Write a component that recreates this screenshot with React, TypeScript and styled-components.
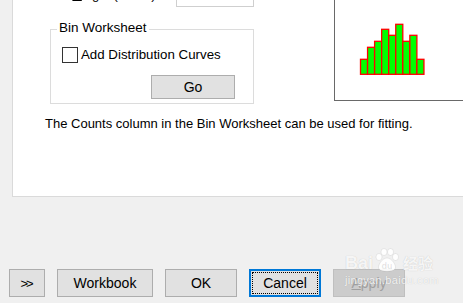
import React from "react";
import styled, { createGlobalStyle } from "styled-components";

const Global = createGlobalStyle`
  html, body { margin: 0; padding: 0; background: #f0f0f0; }
  body { font-family: "Liberation Sans", Arial, sans-serif; font-size: 13px; color: #000; }
`;

const Root = styled.div`
  position: relative;
  width: 463px;
  height: 303px;
  display: flex;
  flex-direction: column;
  overflow: hidden;
  background: #f0f0f0;
`;

const Panel = styled.div`
  margin-left: 12px;
  width: 451px;
  height: 197px;
  box-sizing: border-box;
  background: #fff;
  border-left: 1px solid #dadada;
  border-bottom: 1px solid #dadada;
  overflow: hidden;
  padding-left: 32px;
  display: flex;
  flex-direction: column;
`;

const TopArea = styled.div`
  display: flex;
  align-items: flex-start;
  margin-top: -17px;
  margin-left: 5px;
`;

const LeftCol = styled.div`
  width: 204px;
  flex: none;
  display: flex;
  flex-direction: column;
`;

const HeightRow = styled.div`
  height: 24px;
  display: flex;
  align-items: center;
  justify-content: space-between;
  line-height: 16px;
  font-size: 13px;
`;

const TextBox = styled.div`
  width: 78px;
  height: 24px;
  box-sizing: border-box;
  border: 1px solid #cfcfcf;
  background: #fff;
`;

const GroupBox = styled.div`
  margin-top: 22px;
  width: 204px;
  box-sizing: border-box;
  border: 1px solid #dcdcdc;
  display: flex;
  flex-direction: column;
  padding-bottom: 4px;
`;

const Legend = styled.div`
  align-self: flex-start;
  margin-top: -10px;
  margin-left: 6px;
  padding: 0 2px;
  background: #fff;
  line-height: 16px;
  font-size: 13.5px;
`;

const CheckRow = styled.label`
  margin-top: 11px;
  padding-left: 11px;
  display: flex;
  align-items: center;
  gap: 3px;
  line-height: 16px;
  font-size: 13.3px;
`;

const CheckBox = styled.span`
  width: 16px;
  height: 16px;
  box-sizing: border-box;
  border: 1px solid #333;
  background: #fff;
  flex: none;
`;

const Button = styled.div<{ $w: number; $h: number }>`
  position: relative;
  width: ${(p) => p.$w}px;
  height: ${(p) => p.$h}px;
  box-sizing: border-box;
  border: 1px solid #adadad;
  background: #e1e1e1;
  display: flex;
  align-items: center;
  justify-content: center;
  font-size: 14px;
  color: #000;
  flex: none;
`;

const GoButton = styled(Button)`
  align-self: flex-end;
  margin-top: 12px;
  margin-right: 18px;
`;

const FocusButton = styled(Button)`
  border: 2px solid #0078d7;
  &::after {
    content: "";
    position: absolute;
    inset: 1px;
    border: 1px dotted #000;
  }
`;

const DisabledButton = styled(Button)`
  background: #cccccc;
  border-color: #bfbfbf;
  color: #a0a0a0;
`;

const Preview = styled.div`
  margin-left: 80px;
  width: 160px;
  height: 118px;
  box-sizing: border-box;
  border: 1px solid #696969;
  flex: none;
  background: #fff;
`;

const Histogram = styled.svg`
  display: block;
  margin-top: 39px;
  margin-left: 24px;
`;

const Note = styled.div`
  margin-top: 12px;
  line-height: 16px;
  white-space: nowrap;
  font-size: 13px;
`;

const ButtonBar = styled.div`
  margin-top: auto;
  padding: 0 0 6px 9px;
  display: flex;
  gap: 12px;
`;

const Chevrons = styled.span`
  font-size: 13px;
  letter-spacing: -2px;
  margin-right: 2px;
`;

const Watermark = styled.div`
  position: absolute;
  left: 345px;
  top: 248px;
  display: flex;
  flex-direction: column;
  color: rgba(255, 255, 255, 0.85);
  text-shadow: 0 0 1px rgba(0, 0, 0, 0.2);
  pointer-events: none;
`;

const WmTop = styled.div`
  display: flex;
  align-items: flex-end;
  gap: 1px;
  font-weight: bold;
  font-size: 18px;
  line-height: 18px;
`;

const WmCn = styled.span`
  font-family: "Noto Sans CJK SC", sans-serif;
  font-size: 15px;
  line-height: 18px;
  margin-left: 2px;
`;

const WmUrl = styled.div`
  margin-top: 2px;
  font-size: 11px;
  line-height: 12px;
  letter-spacing: 0.3px;
`;

const bars = [59.3, 47.3, 41.3, 29.3, 35.3, 24.3, 41.3, 35.3, 59.3];

export default function App() {
  return (
    <Root>
      <Global />
      <Panel>
        <TopArea>
          <LeftCol>
            <HeightRow>
              <span>
                Bin <u>H</u>eight (0-100)
              </span>
              <TextBox />
            </HeightRow>
            <GroupBox>
              <Legend>Bin Worksheet</Legend>
              <CheckRow>
                <CheckBox />
                Add Distribution Curves
              </CheckRow>
              <GoButton $w={84} $h={24}>Go</GoButton>
            </GroupBox>
          </LeftCol>
          <Preview>
            <Histogram width="68" height="54" viewBox="359 23 68 54">
              {bars.map((t, i) => (
                <rect
                  key={i}
                  x={360.5 + i * 7.05}
                  y={t}
                  width={7.05}
                  height={74.3 - t}
                  fill="#00ff00"
                  stroke="#ff0000"
                  strokeWidth={1.3}
                />
              ))}
            </Histogram>
          </Preview>
        </TopArea>
        <Note>The Counts column in the Bin Worksheet can be used for fitting.</Note>
      </Panel>
      <ButtonBar>
        <Button $w={36} $h={28}>
          <Chevrons>&gt;&gt;</Chevrons>
        </Button>
        <Button $w={96} $h={28}>Workbook</Button>
        <Button $w={72} $h={28}>OK</Button>
        <FocusButton $w={72} $h={28}>Cancel</FocusButton>
        <DisabledButton $w={72} $h={28}>
          <span>
            <u>A</u>pply
          </span>
        </DisabledButton>
      </ButtonBar>
      <Watermark>
        <WmTop>
          <span>Bai</span>
          <svg width="26" height="24" viewBox="0 0 26 24">
            <g fill="rgba(255,255,255,0.9)" stroke="rgba(0,0,0,0.12)" strokeWidth="0.6">
              <ellipse cx="5" cy="9" rx="3" ry="3.5" />
              <ellipse cx="10" cy="4" rx="3" ry="3.5" />
              <ellipse cx="16.5" cy="4" rx="3" ry="3.5" />
              <ellipse cx="21.5" cy="9" rx="3" ry="3.5" />
              <path d="M13 10 C8 10 3 18 5 21 C7 24 19 24 21 21 C23 18 18 10 13 10 Z" />
            </g>
            <text x="13" y="21" textAnchor="middle" fontSize="9" fontWeight="bold" fill="rgba(0,0,0,0.1)" fontFamily="Liberation Sans, sans-serif">du</text>
          </svg>
          <WmCn>经验</WmCn>
        </WmTop>
        <WmUrl>jingyan.baidu.com</WmUrl>
      </Watermark>
    </Root>
  );
}
